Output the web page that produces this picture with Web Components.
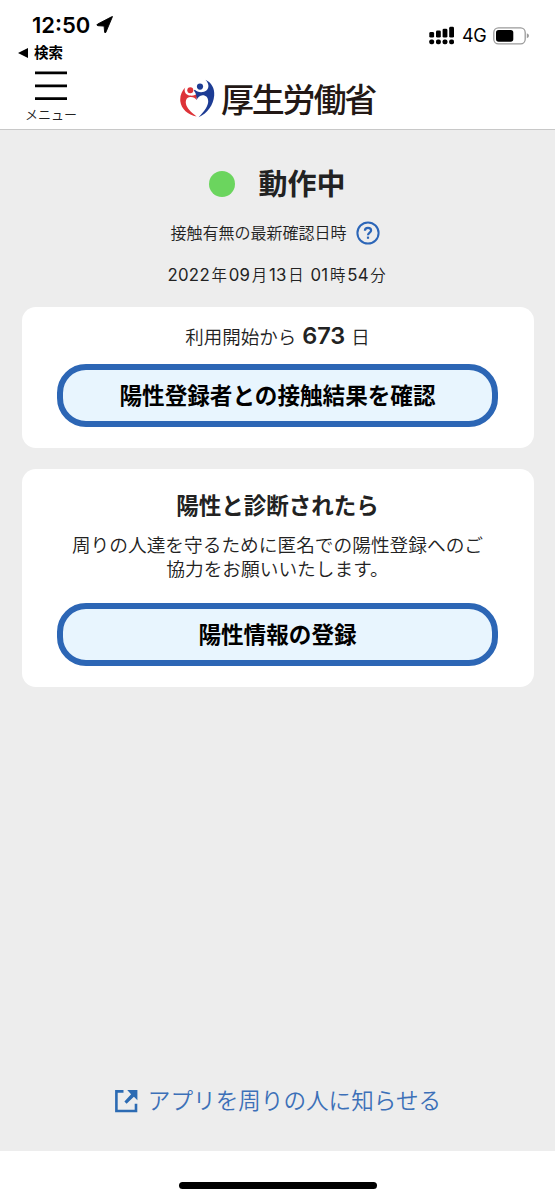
<!DOCTYPE html>
<html lang="ja">
<head>
<meta charset="UTF-8" />
<meta name="viewport" content="width=device-width, initial-scale=1.0" />
<title>厚生労働省</title>
<style>
  body {
    margin: 0;
    background: #fff;
    color: #222;
    font-family: "Inter", "Noto Sans CJK JP", sans-serif;
  }
</style>
</head>
<body>
<app-screen>
  <status-bar slot="top" time="12:50" back="検索" network="4G"></status-bar>
  <app-header slot="top" menu="メニュー" name="厚生労働省"></app-header>
  <app-state label="動作中" caption="接触有無の最新確認日時"></app-state>
  <info-card>
    <usage-days days="673"></usage-days>
    <pill-button>陽性登録者との接触結果を確認</pill-button>
  </info-card>
  <info-card class="second">
    <card-text heading="陽性と診断されたら">周りの人達を守るために匿名での陽性登録へのご協力をお願いいたします。</card-text>
    <pill-button>陽性情報の登録</pill-button>
  </info-card>
  <share-link slot="bottom">アプリを周りの人に知らせる</share-link>
</app-screen>

<script>
class BaseElement extends HTMLElement {
  constructor() {
    super();
    this.attachShadow({ mode: "open" });
  }

  connectedCallback() {
    const template = document.createElement("template");
    template.innerHTML = `<style>${this.getStyles()}</style>${this.getTemplate()}`;
    this.shadowRoot.appendChild(template.content.cloneNode(true));
  }
}

class AppScreen extends BaseElement {
  getTemplate() {
    return `
      <slot name="top"></slot>
      <main>
        <slot></slot>
        <footer><slot name="bottom"></slot></footer>
      </main>
      <div class="home"><span></span></div>
    `;
  }

  getStyles() {
    return `
      :host {
        display: flex;
        flex-direction: column;
        height: 1200px;
        overflow: hidden;
      }
      main {
        flex: 1;
        display: flex;
        flex-direction: column;
        box-sizing: border-box;
        padding: 34px 21.5px 30px;
        background: #ededed;
      }
      footer {
        margin-top: auto;
      }
      .home {
        display: flex;
        justify-content: center;
        height: 49px;
      }
      .home span {
        width: 198px;
        height: 7px;
        margin-top: 30.5px;
        border-radius: 4px;
        background: #000;
      }
    `;
  }
}

class StatusBar extends BaseElement {
  getTemplate() {
    return `
      <div class="left">
        <div class="time">
          <span>${this.getAttribute("time")}</span>
          <svg width="18" height="18" viewBox="0 0 18 18">
            <path d="M16.3 1 L9.9 16.2 Q9.1 17.8 8.6 16 L8.1 10.1 L1.9 9.7 Q-.1 9.1 1.6 8.1 L15.6 .8 Q17 .2 16.3 1Z" stroke="#000" stroke-width=".9" stroke-linejoin="round" />
          </svg>
        </div>
        <div class="back">
          <svg width="10" height="10" viewBox="0 0 10 10"><path d="M0 5 L10 0 V10Z" /></svg>
          <span>${this.getAttribute("back")}</span>
        </div>
      </div>
      <div class="right">
        <svg width="26" height="19" viewBox="0 0 26 19">
          <rect x=".3" y="6" width="4.8" height="5.6" rx="1.4" />
          <rect x="7" y="4.4" width="4.8" height="7.2" rx="1.4" />
          <rect x="13.6" y="2.7" width="4.8" height="8.9" rx="1.4" />
          <rect x="20.2" y=".8" width="4.8" height="10.8" rx="1.4" />
          <rect x=".3" y="13.4" width="4.8" height="4.8" rx="1.8" />
          <rect x="7" y="13.4" width="4.8" height="4.8" rx="1.8" />
          <rect x="13.6" y="13.4" width="4.8" height="4.8" rx="1.8" />
          <rect x="20.2" y="13.4" width="4.8" height="4.8" rx="1.8" />
        </svg>
        <span class="network">${this.getAttribute("network")}</span>
        <svg class="battery" width="36" height="18" viewBox="0 0 36 18">
          <rect x=".8" y=".8" width="31.4" height="16" rx="4.6" fill="none" stroke="#9a9a9a" stroke-width="1.3" />
          <rect x="3" y="3" width="17.3" height="11.7" rx="2.6" />
          <path d="M33.8 6.3 Q36 7.2 36 8.8 Q36 10.4 33.8 11.3Z" fill="#9a9a9a" />
        </svg>
      </div>
    `;
  }

  getStyles() {
    return `
      :host {
        display: flex;
        justify-content: space-between;
        box-sizing: border-box;
        height: 66px;
        padding: 12px 26px 0 18px;
        color: #000;
      }
      .time {
        display: flex;
        align-items: center;
        gap: 6px;
        padding-left: 14px;
        height: 26px;
        font-size: 22px;
        font-weight: 600;
      }
      .back {
        display: flex;
        align-items: center;
        gap: 6px;
        height: 29px;
        font-size: 14.5px;
        font-weight: 700;
        line-height: 29px;
      }
      .right {
        display: flex;
        align-items: center;
        height: 47px;
      }
      .network {
        margin: 0 6px 0 7px;
        width: 25px;
        font-size: 18px;
        letter-spacing: -0.5px;
      }
    `;
  }
}

class AppHeader extends BaseElement {
  getTemplate() {
    return `
      <div class="menu">
        <svg width="32" height="30" viewBox="0 0 32 30">
          <path d="M0 1.8H32M0 14.8H32M0 27.6H32" stroke="#000" stroke-width="2.7" />
        </svg>
        <span>${this.getAttribute("menu")}</span>
      </div>
      <div class="logo">
        <svg width="36" height="40" viewBox="0 0 36 40">
          <path fill="#dd3338" d="M5.2 8.6C1.8 12 -.2 17 .3 22.2C1.2 30 8 35.8 16.6 37.4C11 33.4 6.6 29 5.9 24.6C5.3 21 6.8 18.4 10 18C13 17.7 15.2 19 16.6 21C16.4 18.4 17 16.8 18.6 15L17.8 14.1C15.8 16 13.4 17 10.2 16.6C6.2 16.1 3.4 13 5.2 8.6Z" />
          <path fill="#1d3c94" d="M25.4 .8C31.4 3.4 34.8 9.4 34.2 16.4C33.4 25.8 27.8 34 18.6 38.2C24.6 32 28.2 26.8 28.2 22.2C28.2 18.4 26 16.2 22.6 16.2C19.8 16.2 17.6 18.4 16.7 21C16.8 17.2 16 14 13.8 11.6L14.9 10.8C16.8 12.8 20.2 13.8 24 12.8C29 11.4 30.2 5.6 25.4 .8Z" />
          <circle cx="10.3" cy="11.3" r="3" fill="#dd3338" />
          <circle cx="20" cy="7.6" r="3.1" fill="#1d3c94" />
        </svg>
        <span>${this.getAttribute("name")}</span>
      </div>
    `;
  }

  getStyles() {
    return `
      :host {
        display: grid;
        grid-template-columns: 102px 1fr 102px;
        box-sizing: border-box;
        height: 64px;
        border-bottom: 1px solid #c8c8c8;
      }
      .menu {
        display: flex;
        flex-direction: column;
        align-items: center;
        padding-top: 5px;
        font-size: 13px;
        font-weight: 350;
        line-height: 27px;
      }
      .logo {
        display: flex;
        justify-content: center;
        align-items: center;
        gap: 5px;
        height: 65px;
      }
      .logo span {
        margin-top: 2px;
        color: #231815;
        font-size: 33px;
        font-weight: 500;
        line-height: 40px;
        letter-spacing: -2.2px;
      }
    `;
  }
}

class AppState extends BaseElement {
  getTemplate() {
    return `
      <div class="state"><i></i><b>${this.getAttribute("label")}</b></div>
      <div class="caption">
        <span>${this.getAttribute("caption")}</span>
        <svg width="24" height="24" viewBox="0 0 24 24" fill="none" stroke="#2c66b8" stroke-width="2.2">
          <circle cx="12" cy="12" r="10.6" stroke-width="2" />
          <path d="M8.9 9.8C8.9 8 10.1 6.9 12 6.9S15.1 8 15.1 9.5C15.1 11.6 12 11.8 12 14.2" />
          <path d="M12 15.6V17.8" />
        </svg>
      </div>
      <div class="date">2022<em>年</em>09<em>月</em>13<em>日</em> 01<em>時</em>54<em>分</em></div>
    `;
  }

  getStyles() {
    return `
      :host {
        display: block;
        margin-bottom: 19px;
      }
      .state, .caption {
        display: flex;
        align-items: center;
        justify-content: center;
      }
      .state {
        gap: 23px;
        height: 40px;
        font-size: 29px;
        line-height: 40px;
      }
      .state b {
        margin-top: 1px;
      }
      .state i {
        width: 26px;
        height: 26px;
        border-radius: 50%;
        background: #6bd55e;
      }
      .caption {
        gap: 9px;
        height: 58px;
        padding-right: 5px;
        font-size: 16px;
        font-weight: 350;
      }
      .caption span {
        margin-top: -2px;
      }
      .date {
        height: 26px;
        text-align: center;
        font-size: 16.8px;
        line-height: 26px;
        letter-spacing: 0.3px;
      }
      .date em {
        font-style: normal;
        font-weight: 350;
        font-size: 15.4px;
        margin: 0 1.5px;
      }
    `;
  }
}

class InfoCard extends BaseElement {
  getTemplate() {
    return `<slot></slot>`;
  }

  getStyles() {
    return `
      :host {
        display: block;
        padding: 9px 35.5px 21px;
        border-radius: 14px;
        background: #fff;
      }
      :host(.second) {
        margin-top: 21.5px;
      }
    `;
  }
}

class UsageDays extends BaseElement {
  getTemplate() {
    return `利用開始から<b>${this.getAttribute("days")}</b>日`;
  }

  getStyles() {
    return `
      :host {
        display: block;
        height: 48px;
        text-align: center;
        font-size: 18.5px;
        font-weight: 350;
        line-height: 40px;
      }
      b {
        margin: 0 6px;
        font-size: 23.5px;
        font-weight: 600;
      }
    `;
  }
}

class CardText extends BaseElement {
  getTemplate() {
    return `
      <h2>${this.getAttribute("heading")}</h2>
      <p><slot></slot></p>
    `;
  }

  getStyles() {
    return `
      :host {
        display: block;
        padding-top: 8px;
        text-align: center;
      }
      h2 {
        margin: 0;
        font-size: 22.5px;
        line-height: 39px;
      }
      p {
        margin: 9px -20px 21px;
        padding: 0 33px;
        font-size: 18.7px;
        font-weight: 350;
        line-height: 24px;
      }
    `;
  }
}

class PillButton extends BaseElement {
  getTemplate() {
    return `<button><slot></slot></button>`;
  }

  getStyles() {
    return `
      :host {
        display: block;
      }
      button {
        display: block;
        box-sizing: border-box;
        width: 100%;
        height: 62.5px;
        padding: 0 0 1px;
        border: 6px solid #2c66b5;
        border-radius: 29px;
        background: #e8f5fe;
        color: #000;
        font: 700 22.6px "Noto Sans CJK JP", sans-serif;
      }
    `;
  }
}

class ShareLink extends BaseElement {
  getTemplate() {
    return `
      <svg width="23" height="23" viewBox="0 0 23 23">
        <path d="M8.5 1.4H1.4V21H21V13.8" fill="none" stroke="#2c6bb3" stroke-width="2.6" />
        <path d="M12.2 0H22.4V10.2L18.9 6.7L11.6 13.7L9.4 11.5L16.1 4.2Z" fill="#2c6bb3" />
      </svg>
      <span><slot></slot></span>
    `;
  }

  getStyles() {
    return `
      :host {
        display: flex;
        align-items: center;
        justify-content: center;
        gap: 10px;
        height: 40px;
        padding-left: 1px;
        color: #3c70b8;
        font-size: 22.6px;
        font-weight: 350;
        line-height: 40px;
      }
    `;
  }
}

customElements.define("app-screen", AppScreen);
customElements.define("status-bar", StatusBar);
customElements.define("app-header", AppHeader);
customElements.define("app-state", AppState);
customElements.define("info-card", InfoCard);
customElements.define("usage-days", UsageDays);
customElements.define("card-text", CardText);
customElements.define("pill-button", PillButton);
customElements.define("share-link", ShareLink);
</script>
</body>
</html>
